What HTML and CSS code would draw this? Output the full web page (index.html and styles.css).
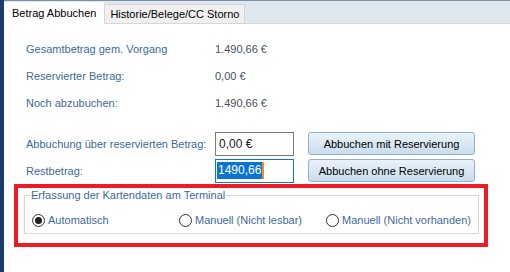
FILE: index.html
```html
<!DOCTYPE html>
<html>
<head>
    <title>Betrag Abbuchen</title>
    <meta charset="utf-8">
    <link rel="stylesheet" href="styles.css">
</head>
<body>
    <div class="window">
        <div class="sidebar"></div>
        <div class="main">
            <div class="tabs">
                <div class="tab tab-active">Betrag Abbuchen</div>
                <div class="tab">Historie/Belege/CC Storno</div>
            </div>
            <div class="panel">
                <div class="info-rows">
                    <span class="label">Gesamtbetrag gem. Vorgang</span>
                    <span class="value">1.490,66 €</span>
                    <span class="label">Reservierter Betrag:</span>
                    <span class="value">0,00 €</span>
                    <span class="label">Noch abzubuchen:</span>
                    <span class="value">1.490,66 €</span>
                </div>
                <div class="entry-rows">
                    <span class="label">Abbuchung über reservierten Betrag:</span>
                    <div class="field">0,00 €</div>
                    <button class="button_blue">Abbuchen mit Reservierung</button>
                    <span class="label">Restbetrag:</span>
                    <div class="field field-focus"><span class="selected">1490,66</span><span class="caret"></span></div>
                    <button class="button_blue">Abbuchen ohne Reservierung</button>
                </div>
                <div class="highlight">
                    <fieldset class="group">
                        <legend>Erfassung der Kartendaten am Terminal</legend>
                        <div class="radio-row">
                            <label class="radio"><span class="dot checked"></span>Automatisch</label>
                            <label class="radio"><span class="dot"></span>Manuell (Nicht lesbar)</label>
                            <label class="radio"><span class="dot"></span>Manuell (Nicht vorhanden)</label>
                        </div>
                    </fieldset>
                </div>
            </div>
        </div>
    </div>
</body>
</html>
```

FILE: styles.css
```css
html {
	font-family: "Liberation Sans", Arial, sans-serif;
	font-size: 11px;
  }
  body {
	margin: 0;
	background-color: white;
  }
  .window {
	display: flex;
	height: 272px;
  }
  .sidebar {
	width: 4px;
	background-color: #1b3b6b;
  }
  .main {
	flex: 1;
	display: flex;
	flex-direction: column;
  }
  .tabs {
	display: flex;
	align-items: flex-end;
	height: 21px;
	background-color: #dfe7ef;
	border-top: 1px solid #7d8ea6;
	border-bottom: 1px solid #d3d6da;
	padding-top: 1px;
  }
  .tab {
	height: 18px;
	line-height: 18px;
	padding: 0 5px;
	font-size: 11px;
	color: #000;
	background-color: #f0f0f0;
	border: 1px solid #d5d5d5;
	border-bottom: none;
  }
  .tab-active {
	height: 21px;
	line-height: 20px;
	padding: 0 7px;
	background-color: white;
	border-color: white;
	margin-bottom: -1px;
  }
  .panel {
	padding: 11px 0 0 10px;
  }
  .info-rows {
	display: grid;
	grid-template-columns: 189px auto;
	grid-auto-rows: 27px;
	align-items: center;
	padding-left: 12px;
  }
  .label {
	color: #3a6a9e;
  }
  .value {
	color: #46505c;
  }
  .entry-rows {
	display: grid;
	grid-template-columns: 189px 79px 181px;
	grid-auto-rows: 27px;
	align-items: center;
	padding-left: 12px;
	margin-top: 14px;
  }
  .field {
	height: 22px;
	line-height: 22px;
	border: 1px solid #7a7a7a;
	padding: 0 3px;
	color: #222;
	font-size: 12px;
  }
  .field-focus {
	border-color: #0a78d2;
	padding-left: 1px;
	display: flex;
	align-items: center;
  }
  .selected {
	background-color: #0a74d6;
	color: white;
	line-height: 17px;
	padding: 0 1px;
  }
  .caret {
	width: 2px;
	height: 17px;
	background-color: #f08a24;
  }
  .button_blue {
	width: 167px;
	height: 23px;
	margin-left: 14px;
	font-family: inherit;
	font-size: 11px;
	color: #000;
	background: linear-gradient(#eaf2f9, #c9dded);
	border: 1px solid #90b1cb;
	border-radius: 3px;
	padding: 0;
  }
  .highlight {
	width: 454px;
	border: 4px solid #ed1c24;
	padding: 1px 6px 9px;
  }
  .group {
	margin: 0;
	padding: 0 5px 6px;
	border: 1px solid #d8d8d8;
  }
  .group legend {
	padding: 0 1px;
	line-height: 13px;
	color: #3a6a9e;
  }
  .radio-row {
	display: grid;
	grid-template-columns: repeat(3, 147px);
	margin-top: 11px;
	padding-left: 2px;
	height: 14px;
	align-items: center;
  }
  .radio {
	display: flex;
	align-items: center;
	gap: 3px;
	color: #3a6a9e;
  }
  .dot {
	width: 11px;
	height: 11px;
	border: 1px solid #333;
	border-radius: 50%;
	display: flex;
	align-items: center;
	justify-content: center;
  }
  .dot.checked::after {
	content: "";
	width: 7px;
	height: 7px;
	border-radius: 50%;
	background-color: #222;
  }
```
